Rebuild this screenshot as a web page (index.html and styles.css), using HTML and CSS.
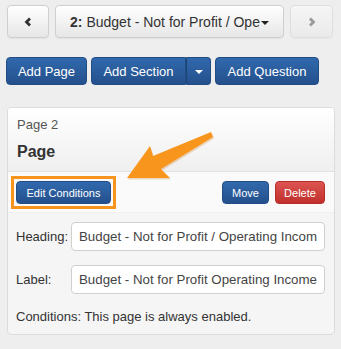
FILE: index.html
```html
<!DOCTYPE html>
<html lang="en">
<head>
  <meta charset="UTF-8">
  <title>Page editor</title>
  <link rel="stylesheet" href="styles.css">
</head>
<body>

  <div class="pager">
    <button class="btn btn-default nav-btn">
      <svg width="8" height="10" viewBox="0 0 8 10"><path d="M6 1.5 L2.5 5 L6 8.5" fill="none" stroke="#333" stroke-width="2.8"/></svg>
    </button>
    <button class="btn btn-default page-select"><b>2:</b> Budget - Not for Profit / Ope<span class="caret"></span></button>
    <button class="btn btn-default nav-btn disabled">
      <svg width="8" height="10" viewBox="0 0 8 10"><path d="M2 1.5 L5.5 5 L2 8.5" fill="none" stroke="#333" stroke-width="2.8"/></svg>
    </button>
  </div>

  <div class="toolbar">
    <button class="btn btn-primary add-page">Add Page</button>
    <div class="btn-group">
      <button class="btn btn-primary add-section">Add Section</button>
      <button class="btn btn-primary split"><span class="caret caret-white"></span></button>
    </div>
    <button class="btn btn-primary add-question">Add Question</button>
  </div>

  <div class="panel">
    <div class="panel-head">
      <div class="page-num">Page 2</div>
      <div class="page-title">Page</div>
    </div>
    <div class="panel-actions">
      <span class="highlight">
        <button class="btn btn-primary btn-sm edit-btn">Edit Conditions</button>
      </span>
      <div class="right-actions">
        <button class="btn btn-primary btn-sm move-btn">Move</button>
        <button class="btn btn-danger btn-sm delete-btn">Delete</button>
      </div>
    </div>
    <div class="panel-body">
      <div class="field">
        <label>Heading:</label>
        <input type="text" value="Budget - Not for Profit / Operating Income">
      </div>
      <div class="field">
        <label>Label:</label>
        <input type="text" value="Budget - Not for Profit Operating Income">
      </div>
      <p class="conditions">Conditions: This page is always enabled.</p>
    </div>

    <!-- callout arrow -->
    <svg class="callout" width="210" height="75" viewBox="0 0 210 75">
      <polygon points="119,70 142,38 145,48 203,24 205,29 153,61 162,70" fill="#c87010" opacity="0.25" transform="translate(1,1.5)"/>
      <polygon points="119,70 142,38 145,48 203,24 205,29 153,61 162,70" fill="#f8951d"/>
    </svg>
  </div>

</body>
</html>
```

FILE: styles.css
```css
* {
  box-sizing: border-box;
}
body {
  margin: 0;
  padding: 5px 6px 0 7px;
  background: #eeeeee;
  font-family: "Liberation Sans", Arial, sans-serif;
  color: #333;
}
.btn {
  font-family: "Liberation Sans", Arial, sans-serif;
  border-radius: 4px;
  border: 1px solid #ccc;
  cursor: pointer;
  padding: 0;
  white-space: nowrap;
}
.btn-default {
  background: linear-gradient(#ffffff, #e6e6e6);
  color: #333;
  border-color: #cfcfcf;
  box-shadow: 0 1px 1px rgba(0,0,0,0.05);
}
.btn-primary {
  background: linear-gradient(#3169ad, #24508c);
  border-color: #214c84;
  color: #fff;
  font-size: 13px;
  height: 28px;
}
.btn-danger {
  background: linear-gradient(#dc5450, #c0302c);
  border-color: #b72d29;
  color: #fff;
}
.pager {
  display: flex;
  gap: 6px;
}
.nav-btn {
  width: 42px;
  height: 33px;
  display: flex;
  align-items: center;
  justify-content: center;
}
.nav-btn.disabled {
  opacity: 0.45;
  width: 43px;
}
.page-select {
  width: 229px;
  height: 33px;
  font-size: 14px;
  text-align: center;
}
.caret {
  display: inline-block;
  width: 0;
  height: 0;
  margin-left: 1px;
  vertical-align: middle;
  border-top: 4px solid #222;
  border-left: 4px solid transparent;
  border-right: 4px solid transparent;
}
.caret-white {
  border-top-color: #fff;
  margin: 0;
}
.toolbar {
  display: flex;
  gap: 4px;
  margin: 19px 0 0 -1px;
}
.btn-group {
  display: flex;
}
.add-page {
  width: 81px;
}
.add-section {
  width: 95px;
  border-radius: 4px 0 0 4px;
}
.split {
  width: 25px;
  border-radius: 0 4px 4px 0;
  border-left-color: #1d4476;
}
.add-question {
  width: 104px;
}
.panel {
  position: relative;
  margin-top: 22px;
  width: 328px;
  border: 1px solid #dcdcdc;
  border-radius: 4px;
  background: #f5f5f5;
  overflow: hidden;
}
.panel-head {
  background: linear-gradient(#ffffff, #efefef);
  padding: 9px 9px 10px;
  border-bottom: 1px solid #e2e2e2;
}
.page-num {
  font-size: 13px;
  color: #555;
}
.page-title {
  font-size: 16px;
  font-weight: bold;
  margin-top: 11px;
}
.panel-actions {
  display: flex;
  justify-content: space-between;
  align-items: center;
  background: #fafafa;
  padding: 4px 9px 3px 3px;
  border-bottom: 1px solid #f0f0f0;
}
.right-actions {
  display: flex;
  gap: 6px;
}
.btn-sm {
  font-size: 11px;
  height: 23px;
  padding: 0;
}
.move-btn {
  width: 47px;
}
.delete-btn {
  width: 50px;
}
.highlight {
  display: block;
  border: 3px solid #f7941d;
  padding: 2px;
}
.edit-btn {
  display: block;
  width: 95px;
}
.panel-body {
  padding: 9px 9px 10px 8px;
}
.field {
  display: grid;
  grid-template-columns: 55px 1fr;
  align-items: center;
  margin-bottom: 14px;
}
.field label {
  font-size: 13px;
  color: #333;
}
.field input {
  font-family: "Liberation Sans", Arial, sans-serif;
  font-size: 13.3px;
  color: #444;
  height: 29px;
  width: 254px;
  padding: 0 7px;
  border: 1px solid #d0d0d0;
  border-radius: 4px;
  background: #fff;
}
.conditions {
  margin: 0;
  padding-top: 1px;
  font-size: 13px;
}
.callout {
  position: absolute;
  left: 0;
  top: 0;
  pointer-events: none;
}
```
